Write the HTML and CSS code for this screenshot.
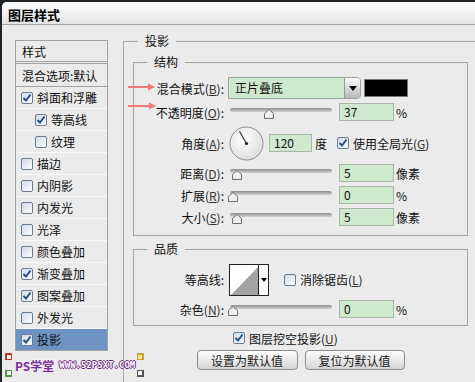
FILE: index.html
```html
<!DOCTYPE html>
<html lang="zh-CN">
<head>
  <meta charset="UTF-8">
  <title>图层样式</title>
  <link rel="stylesheet" href="styles.css">
</head>
<body>
  <div class="window">
    <div class="titlebar">图层样式</div>
    <div class="main">
      <div class="side">
        <ul class="styles">
          <li class="head">样式</li>
          <li class="blend">混合选项:默认</li>
          <li><span class="cb on"><svg viewBox="0 0 10 10"><path d="M1.5 5 L4 7.5 L8.5 1.5"/></svg></span>斜面和浮雕</li>
          <li class="sub"><span class="cb on"><svg viewBox="0 0 10 10"><path d="M1.5 5 L4 7.5 L8.5 1.5"/></svg></span>等高线</li>
          <li class="sub"><span class="cb"></span>纹理</li>
          <li><span class="cb"></span>描边</li>
          <li><span class="cb"></span>内阴影</li>
          <li><span class="cb"></span>内发光</li>
          <li><span class="cb"></span>光泽</li>
          <li><span class="cb"></span>颜色叠加</li>
          <li><span class="cb on"><svg viewBox="0 0 10 10"><path d="M1.5 5 L4 7.5 L8.5 1.5"/></svg></span>渐变叠加</li>
          <li><span class="cb on"><svg viewBox="0 0 10 10"><path d="M1.5 5 L4 7.5 L8.5 1.5"/></svg></span>图案叠加</li>
          <li><span class="cb"></span>外发光</li>
          <li class="selected"><span class="cb on"><svg viewBox="0 0 10 10"><path d="M1.5 5 L4 7.5 L8.5 1.5"/></svg></span>投影</li>
        </ul>
        <div class="mark">
          <div class="corners"><span class="c red"></span><span class="c green"></span></div>
          <span class="ps">PS学堂</span>
          <span class="www">WWW.52PSXT.COM</span>
          <div class="corners"><span class="c yellow"></span><span class="c yellow2"></span></div>
        </div>
      </div>

      <fieldset class="outer">
        <legend>投影</legend>

        <fieldset class="group struct">
          <legend>结构</legend>
          <div class="row">
            <svg class="arrow" width="28" height="8" viewBox="0 0 28 8"><path d="M0 4 H22" stroke="#f07878" stroke-width="2"/><path d="M20 0.5 L27 4 L20 7.5 Z" fill="#f07878"/></svg>
            <span class="label">混合模式(<u>B</u>):</span>
            <div class="select"><span class="value">正片叠底</span><span class="drop"><svg width="8" height="5" viewBox="0 0 8 5"><path d="M0 0 H8 L4 5 Z"/></svg></span></div>
            <span class="swatch"></span>
          </div>
          <div class="row r2">
            <svg class="arrow arrow2" width="29" height="8" viewBox="0 0 29 8"><path d="M0 4 H23" stroke="#f07878" stroke-width="2"/><path d="M21 0.5 L28 4 L21 7.5 Z" fill="#f07878"/></svg>
            <span class="label">不透明度(<u>O</u>):</span>
            <div class="slider"><div class="track"></div><svg class="thumb" style="left:36px" width="10" height="10" viewBox="0 0 10 10"><path d="M5 0.5 L9.5 4.5 V9.5 H0.5 V4.5 Z"/></svg></div>
            <span class="num">37</span>
            <span class="unit">%</span>
          </div>
          <div class="row angle">
            <span class="label">角度(<u>A</u>):</span>
            <svg class="dial" width="35" height="35" viewBox="0 0 35 35">
              <defs><radialGradient id="dg" cx="40%" cy="35%" r="70%"><stop offset="0" stop-color="#ffffff"/><stop offset="1" stop-color="#dcdcdc"/></radialGradient></defs>
              <circle cx="17.5" cy="17.5" r="16.5" fill="url(#dg)" stroke="#8d8d8d"/>
              <path d="M17.5 17.5 L10.5 5.5" stroke="#333" stroke-width="1.3"/>
              <circle cx="17.5" cy="17.5" r="1.6" fill="#222"/>
            </svg>
            <span class="num short">120</span>
            <span class="unit deg">度</span>
            <span class="cb on global"><svg viewBox="0 0 10 10"><path d="M1.5 5 L4 7.5 L8.5 1.5"/></svg></span>
            <span class="cblabel">使用全局光(<u>G</u>)</span>
          </div>
          <div class="row r4">
            <span class="label">距离(<u>D</u>):</span>
            <div class="slider"><div class="track"></div><svg class="thumb" style="left:4px" width="10" height="10" viewBox="0 0 10 10"><path d="M5 0.5 L9.5 4.5 V9.5 H0.5 V4.5 Z"/></svg></div>
            <span class="num">5</span>
            <span class="unit">像素</span>
          </div>
          <div class="row">
            <span class="label">扩展(<u>R</u>):</span>
            <div class="slider"><div class="track"></div><svg class="thumb" style="left:0px" width="10" height="10" viewBox="0 0 10 10"><path d="M5 0.5 L9.5 4.5 V9.5 H0.5 V4.5 Z"/></svg></div>
            <span class="num">0</span>
            <span class="unit">%</span>
          </div>
          <div class="row">
            <span class="label">大小(<u>S</u>):</span>
            <div class="slider"><div class="track"></div><svg class="thumb" style="left:4px" width="10" height="10" viewBox="0 0 10 10"><path d="M5 0.5 L9.5 4.5 V9.5 H0.5 V4.5 Z"/></svg></div>
            <span class="num">5</span>
            <span class="unit">像素</span>
          </div>
        </fieldset>

        <fieldset class="group quality">
          <legend>品质</legend>
          <div class="row contour-row">
            <span class="label">等高线:</span>
            <div class="contour">
              <svg width="30" height="32" viewBox="0 0 30 32"><rect x="0.5" y="0.5" width="29" height="31" fill="#fff" stroke="#222"/><path d="M2 31 L29 3 V31 Z" fill="#a3a3a3"/></svg>
              <span class="cdrop"><svg width="6" height="4" viewBox="0 0 6 4"><path d="M0 0 H6 L3 4 Z"/></svg></span>
            </div>
            <span class="cb aa"></span>
            <span class="cblabel">消除锯齿(<u>L</u>)</span>
          </div>
          <div class="row r2">
            <span class="label">杂色(<u>N</u>):</span>
            <div class="slider"><div class="track"></div><svg class="thumb" style="left:0px" width="10" height="10" viewBox="0 0 10 10"><path d="M5 0.5 L9.5 4.5 V9.5 H0.5 V4.5 Z"/></svg></div>
            <span class="num">0</span>
            <span class="unit">%</span>
          </div>
        </fieldset>

        <div class="knock"><span class="cb on"><svg viewBox="0 0 10 10"><path d="M1.5 5 L4 7.5 L8.5 1.5"/></svg></span><span class="cblabel">图层挖空投影(<u>U</u>)</span></div>
        <div class="btns">
          <button class="btn">设置为默认值</button>
          <button class="btn narrow">复位为默认值</button>
        </div>
      </fieldset>
    </div>
  </div>
</body>
</html>
```

FILE: styles.css
```css
html, body {
  margin: 0;
  padding: 0;
  height: 100%;
  overflow: hidden;
}
body {
  background: #1f2429;
  font-family: "Noto Sans CJK SC", "Noto Sans", sans-serif;
  font-size: 12px;
  color: #111;
}
.window {
  margin: 2px 0 0 2px;
  height: 380px;
  background: #ebebeb;
  border-top-left-radius: 5px;
  overflow: hidden;
}
.titlebar {
  height: 19px;
  padding: 3px 0 0 6px;
  line-height: 19px;
  font-size: 13px;
  font-weight: bold;
  color: #000;
  background: linear-gradient(#fdfdfd, #e4e4e4);
  border-bottom: 1px solid #a6a6a6;
}
.main {
  display: flex;
  align-items: flex-start;
  padding: 9px 0 0 13px;
}

/* left list */
.side {
  flex: none;
  width: 93px;
  margin-top: 6px;
}
.styles {
  list-style: none;
  margin: 0;
  padding: 0;
  border: 1px solid #a2a2a2;
}
.styles li {
  display: flex;
  align-items: center;
  height: 21px;
  border-bottom: 1px solid #f9f9f9;
  white-space: nowrap;
}
.styles li:last-child {
  border-bottom: none;
}
.styles li.head {
  height: 20px;
  padding-left: 6px;
  border-bottom: 3px double #a2a2a2;
}
.styles li.blend {
  height: 22px;
  padding-left: 6px;
  border-bottom: 1px solid #a2a2a2;
}
.styles li .cb {
  margin: 0 4px 0 5px;
}
.styles li.sub .cb {
  margin-left: 19px;
}
.styles li.selected {
  background: #6e93c3;
}

.cb {
  flex: none;
  display: inline-flex;
  width: 12px;
  height: 12px;
  box-sizing: border-box;
  border: 1px solid #687c94;
  border-radius: 2px;
  background: linear-gradient(135deg, #d3dbe5, #fbfcfd);
}
.cb svg {
  width: 10px;
  height: 10px;
}
.cb path {
  fill: none;
  stroke: #23508e;
  stroke-width: 2;
}

/* watermark */
.mark {
  display: flex;
  align-items: center;
  height: 26px;
  margin: 1px 0 0 -10px;
  white-space: nowrap;
}
.corners {
  display: flex;
  flex-direction: column;
  justify-content: space-between;
  height: 24px;
  width: 7px;
}
.c {
  display: block;
  width: 4px;
  height: 4px;
  border: 1px solid #888;
  background: #fff;
}
.c.red { border-color: #c0392b; border-width: 2px 1px 1px 2px; }
.c.green { border-color: #4d9a3a; border-width: 1px 1px 2px 2px; }
.c.yellow { border-color: #c9a227; border-width: 2px 2px 1px 1px; background: #f6e7a0; }
.c.yellow2 { border-color: #555; border-width: 1px 2px 2px 1px; }
.ps {
  margin-left: 3px;
  font-size: 12px;
  font-weight: bold;
  color: #7a2b98;
  text-shadow: 1px 0 #fff, -1px 0 #f3e6f7, 0 1px #f3e6f7, 0 -1px #fff;
}
.www {
  margin: 0 2px 0 5px;
  font-family: "DejaVu Sans Mono", "Liberation Mono", monospace;
  font-size: 9px;
  font-weight: bold;
  color: #fff;
  text-shadow: 1px 0 #6b2a8a, -1px 0 #6b2a8a, 0 1px #6b2a8a, 0 -1px #6b2a8a;
}

/* groups */
fieldset {
  margin: 0;
  min-width: 0;
  border: 1px solid #a6a6a6;
}
legend {
  padding: 0 7px;
  line-height: 14px;
}
.outer {
  flex: none;
  width: 380px;
  margin-left: 15px;
  padding: 0 0 30px 9px;
}
.outer > legend {
  margin-left: 5px;
}
.group {
  width: 333px;
  margin-top: 7px;
  padding: 8px 0 7px 0;
}
.group > legend {
  margin-left: 13px;
}
.quality {
  margin-top: 6px;
  padding: 7px 0 5px 0;
}

.row {
  position: relative;
  display: flex;
  align-items: center;
  height: 22px;
  white-space: nowrap;
}
.row.r2 {
  margin-top: 2px;
}
.row.angle {
  height: 36px;
  margin-top: 2px;
}
.row.r4 {
  margin-top: 1px;
}
.row.contour-row {
  height: 33px;
}
.label {
  flex: none;
  width: 90px;
  text-align: right;
}
u {
  color: #333;
}
.arrow {
  position: absolute;
  left: -6px;
  top: 6px;
}
.arrow2 {
  top: 1px;
}

.select {
  display: flex;
  width: 133px;
  height: 22px;
  margin-left: 4px;
  box-sizing: border-box;
  border: 1px solid #9aa49a;
  border-radius: 0 4px 4px 0;
  background: #cde8cd;
}
.select .value {
  flex: 1;
  padding-left: 6px;
  line-height: 20px;
}
.select .drop {
  display: flex;
  align-items: center;
  justify-content: center;
  width: 15px;
  border-left: 1px solid #9a9a9a;
  border-radius: 0 3px 3px 0;
  background: linear-gradient(#fbfbfb, #b9b9b9);
}
.swatch {
  width: 44px;
  height: 18px;
  margin-left: 3px;
  box-sizing: border-box;
  border: 1px solid #777;
  background: #000;
}

.slider {
  position: relative;
  flex: none;
  width: 104px;
  height: 14px;
  margin-left: 4px;
}
.track {
  height: 4px;
  margin: 3px 0 0 2px;
  border-radius: 2px;
  background: linear-gradient(#8f8f8f, #d2d2d2);
}
.thumb {
  position: absolute;
  top: 4px;
}
.thumb path {
  fill: #eeeeee;
  stroke: #6f6f6f;
}
.num {
  flex: none;
  width: 55px;
  height: 18px;
  margin-left: 7px;
  padding-left: 4px;
  box-sizing: border-box;
  border: 1px solid #a9b7a9;
  background: #cfe9cf;
  line-height: 16px;
}
.num.short {
  width: 43px;
  margin-left: 5px;
}
.unit {
  margin-left: 2px;
}
.unit.deg {
  margin-left: 3px;
}
.dial {
  flex: none;
  margin-left: 5px;
}
.cb.global {
  margin-left: 10px;
}
.cblabel {
  margin-left: 4px;
}

.contour {
  display: flex;
  height: 32px;
  margin-left: 5px;
}
.cdrop {
  display: flex;
  align-items: center;
  justify-content: center;
  width: 10px;
  box-sizing: border-box;
  border: 1px solid #222;
  border-left: none;
  background: #fff;
}
.cb.aa {
  margin-left: 15px;
}

.knock {
  display: flex;
  align-items: center;
  height: 16px;
  margin-top: 4px;
  padding-left: 100px;
}
.btns {
  display: flex;
  justify-content: center;
  gap: 7px;
  width: 335px;
  margin-top: 4px;
}
.btn {
  width: 101px;
  height: 20px;
  padding: 0;
  font-family: inherit;
  font-size: 12px;
  color: #222;
  border: 1px solid #8c8c8c;
  border-radius: 4px;
  background: linear-gradient(#fdfdfd, #d6d6d6);
}
.btn.narrow {
  width: 100px;
}
```
